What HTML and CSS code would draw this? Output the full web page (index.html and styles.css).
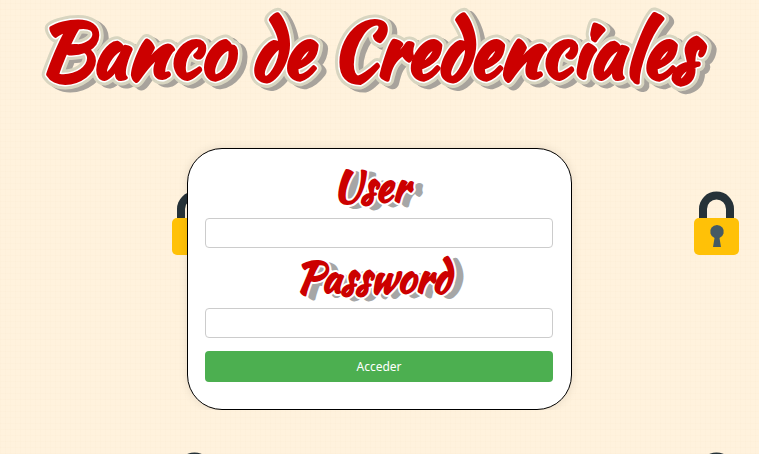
FILE: index.html
```html
<!DOCTYPE html>
<html lang="es">
<head>
<meta charset="utf-8">
<meta name="viewport" content="width=device-width, initial-scale=1">
<title>Banco de Credenciales</title>
<link rel="stylesheet" href="styles.css">
</head>
<body>
<div class="top-shade"></div>
<header>
  <h1 class="title">
    <svg class="lettering" viewBox="0 0 759 100">
      <use class="title-shadow" href="#title-text" x="5" y="3"/>
      <use class="title-rim" href="#title-text"/>
      <use class="title-edge" href="#title-text"/>
      <g class="title-face"><text id="title-text" x="368" y="77">Banco de Credenciales</text></g>
    </svg>
  </h1>
</header>
<main>
  <form class="card">
    <label class="field-label" for="user">
      <svg class="lettering" viewBox="0 0 348 44">
        <use class="label-shadow" href="#user-text" x="8" y="3"/>
        <use class="label-edge" href="#user-text"/>
        <g class="label-face"><text id="user-text" x="166" y="35">User</text></g>
      </svg>
    </label>
    <input class="field" id="user" type="text">
    <label class="field-label" for="password">
      <svg class="lettering" viewBox="0 0 348 44">
        <use class="label-shadow" href="#password-text" x="8" y="3"/>
        <use class="label-edge" href="#password-text"/>
        <g class="label-face"><text id="password-text" x="168" y="36">Password</text></g>
      </svg>
    </label>
    <input class="field" id="password" type="password">
    <button class="submit" type="button">Acceder</button>
  </form>
</main>
</body>
</html>
```
FILE: styles.css
```css
* {
  box-sizing: border-box;
}

html {
  min-height: 100%;
  background-color: #fff2dd;
  background-image:
    url("data:image/svg+xml,%3Csvg xmlns='http://www.w3.org/2000/svg' width='522' height='261'%3E%3Cpath d='M177 220V209a17.500 17.500 0 0 1 35 0V220h-8V209a9.500 9.500 0 0 0-19 0V220z' fill='%23263238'/%3E%3Crect x='172' y='218' width='45' height='37' rx='5' fill='%23ffc107'/%3E%3Cpath d='M191 247l1.500-9a6.800 6.800 0 1 1 5 0l1.500 9z' fill='%23455a64'/%3E%3C/svg%3E"),
    repeating-linear-gradient(90deg, rgba(190, 140, 60, 0.015) 0 1px, transparent 1px 5px),
    repeating-linear-gradient(0deg, rgba(190, 140, 60, 0.015) 0 1px, transparent 1px 6px);
}

body {
  margin: 0;
  font-family: "Noto Sans", sans-serif;
}

.top-shade {
  width: 38%;
  height: 0;
  margin: 0 auto;
  box-shadow: 0 0 10px 0 rgba(0, 0, 0, 0.2);
}

.title,
.field-label {
  font-family: "Kaushan Script", "Lato", cursive;
  font-weight: 400;
}

.title {
  margin: 0;
  font-size: 75px;
}

.lettering {
  display: block;
  width: 100%;
  overflow: visible;
  text-anchor: middle;
  stroke-linejoin: round;
}

.title-shadow {
  fill: #a8a39c;
  stroke: #a8a39c;
  stroke-width: 13px;
}

.title-rim {
  fill: #d8d5c0;
  stroke: #d8d5c0;
  stroke-width: 13px;
}

.title-edge {
  fill: #ffffff;
  stroke: #ffffff;
  stroke-width: 7px;
}

.title-face {
  fill: #cc0000;
  stroke: #cc0000;
  stroke-width: 4px;
}

.card {
  display: flex;
  flex-direction: column;
  width: calc(100% - 32px);
  max-width: 385px;
  margin: 48px auto 0;
  padding: 17px 18px 27px 17px;
  border: 1px solid #000000;
  border-radius: 35px;
  background: #ffffff;
  box-shadow: 0 0 10px rgba(0, 0, 0, 0.1);
}

.field-label {
  margin-bottom: 8px;
  font-size: 42px;
}

.label-shadow {
  fill: #a6a6a6;
  stroke: #a6a6a6;
  stroke-width: 4px;
}

.label-edge {
  fill: #ffffff;
  stroke: #ffffff;
  stroke-width: 6px;
}

.label-face {
  fill: #cc0000;
  stroke: #cc0000;
  stroke-width: 2px;
}

.field {
  width: 100%;
  height: 30px;
  margin: 0 0 8px;
  padding: 4px 8px;
  border: 1px solid #cccccc;
  border-radius: 4px;
  background: #ffffff;
  font: 12px "Noto Sans", sans-serif;
}

.submit {
  height: 31px;
  margin-top: 5px;
  padding: 0 8px;
  border: 0;
  border-radius: 4px;
  background: #4caf50;
  color: #ffffff;
  font: 12px "Noto Sans", sans-serif;
}
```
